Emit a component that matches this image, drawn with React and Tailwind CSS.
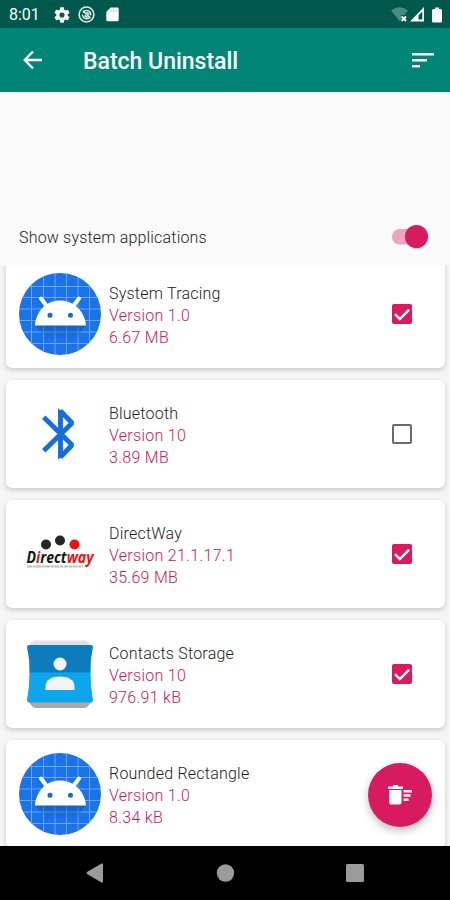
import React from "react";

function AndroidIcon() {
  return (
    <svg width="82" height="82" viewBox="0 0 82 82">
      <defs>
        <clipPath id="disc">
          <circle cx="41" cy="41" r="41" />
        </clipPath>
        <linearGradient id="headShade" x1="0" y1="0" x2="0" y2="1">
          <stop offset="0" stopColor="#0b4fae" stopOpacity="0.55" />
          <stop offset="1" stopColor="#0b4fae" stopOpacity="0" />
        </linearGradient>
      </defs>
      <g clipPath="url(#disc)">
        <rect width="82" height="82" fill="#1a73e8" />
        <path
          d="M12.500 0V82M24.500 0V82M36 0V82M47.500 0V82M59 0V82M70.500 0V82M0 13.500H82M0 24.500H82M0 36H82M0 47.500H82M0 59H82M0 70.500H82"
          stroke="#6aa6f3"
          strokeWidth="1"
        />
        <path d="M16 52H67L56 68H30Z" fill="url(#headShade)" />
      </g>
      <path d="M22 25.500L28.500 34M60 25.500L53.500 34" stroke="#fff" strokeWidth="4" strokeLinecap="round" />
      <path d="M16 52.500C17 37.500 28 27.500 41 27.500S65.500 37.500 67 52.500Z" fill="#fff" />
      <circle cx="31" cy="42.200" r="2.500" fill="#1a67d0" />
      <circle cx="51.500" cy="42.200" r="2.500" fill="#1a67d0" />
    </svg>
  );
}

function BluetoothIcon() {
  return (
    <svg width="82" height="82" viewBox="0 0 82 82" fill="none">
      <g transform="translate(.3 0)">
        <path
          d="M26.200 26L52.800 52L41.200 64V18L52.800 30L26.200 56"
          stroke="#146ee2"
          strokeWidth="4.900"
          strokeLinejoin="bevel"
          strokeLinecap="square"
        />
        <path d="M38.750 15.200L43.500 19.500H38.750ZM38.750 66.800L43.500 62.500H38.750Z" fill="#146ee2" />
      </g>
    </svg>
  );
}

function DirectWayIcon() {
  return (
    <svg width="82" height="82" viewBox="0 0 82 82">
      <circle cx="27" cy="31.500" r="5" fill="#262626" />
      <circle cx="41" cy="27.500" r="5" fill="#262626" />
      <circle cx="55.500" cy="31.500" r="5" fill="#f01010" />
      <text
        x="7.500"
        y="50"
        fontFamily="'Open Sans', sans-serif"
        fontSize="15.500"
        fontWeight="700"
        fontStyle="italic"
        textLength="67"
        lengthAdjust="spacingAndGlyphs"
        fill="#151515"
      >
        D<tspan fill="#f01010">i</tspan>rect<tspan fill="#f01010">way</tspan>
      </text>
      <path d="M8 53.500H64" stroke="#bdbdbd" strokeWidth="1.800" strokeDasharray="5 .6 3 .5" />
    </svg>
  );
}

function ContactsIcon() {
  return (
    <svg width="82" height="82" viewBox="0 0 82 82">
      <path d="M12 10Q13 7.500 17 7.500H65Q69 7.500 70 10L74 16H8Z" fill="#e1e1e1" />
      <path d="M8 67L13 73Q14 75 17 75H65Q68 75 69 73L74 67Z" fill="#aaa" />
      <path d="M8 14Q8 12 11 12H71Q74 12 74 14Q71 27 71.500 40H10.500Q11 27 8 14Z" fill="#0c7cbd" />
      <path d="M10.500 39.500H71.500Q71.500 54 74 67Q74 69.500 71 69.500H11Q8 69.500 8 67Q10.500 54 10.500 39.500Z" fill="#0ba6ec" />
      <circle cx="41" cy="31" r="6.500" fill="#f1f3f4" />
      <path d="M26.500 57V53.500C26.500 46.500 33 43.500 41 43.500S55.500 46.500 55.500 53.500V57Z" fill="#f1f3f4" />
    </svg>
  );
}

function Checkbox({ checked }) {
  if (!checked) {
    return <span className="h-5 w-5 rounded-[2px] border-2 border-[#6b6b6b]" />;
  }
  return (
    <svg width="20" height="20" viewBox="0 0 20 20">
      <rect width="20" height="20" rx="2" fill="#d81b60" />
      <path d="M3 10.200L7.800 15L17.200 5.600" fill="none" stroke="#fff" strokeWidth="2.400" />
    </svg>
  );
}

const apps = [
  { name: "System Tracing", version: "1.0", size: "6.67 MB", Icon: AndroidIcon, checked: true },
  { name: "Bluetooth", version: "10", size: "3.89 MB", Icon: BluetoothIcon, checked: false },
  { name: "DirectWay", version: "21.1.17.1", size: "35.69 MB", Icon: DirectWayIcon, checked: true },
  { name: "Contacts Storage", version: "10", size: "976.91 kB", Icon: ContactsIcon, checked: true },
  { name: "Rounded Rectangle", version: "1.0", size: "8.34 kB", Icon: AndroidIcon, hideCheckbox: true },
];

function AppCard({ name, version, size, Icon, checked, hideCheckbox }) {
  return (
    <div className="flex h-[108px] shrink-0 items-center rounded-md bg-white pl-[13px] pr-[33px] shadow-[0_2px_5px_rgba(0,0,0,0.2)]">
      <Icon />
      <div className="ml-2 flex-1 whitespace-nowrap pt-[3px] text-base font-light leading-[22px] tracking-[0.28px] text-[#d01852]">
        <div className="tracking-[0.22px] text-[#1c1c1c]">{name}</div>
        <div>Version {version}</div>
        <div>{size}</div>
      </div>
      {!hideCheckbox && <Checkbox checked={checked} />}
    </div>
  );
}

function StatusBar() {
  return (
    <div className="flex h-7 items-center bg-[#00574b] pl-[9px] pr-2 pt-px text-white">
      <span className="w-[45px] text-[16px] leading-7">8:01</span>
      <svg width="16" height="16" viewBox="2 2 20 20" fill="#fff">
        <path d="M19.140 12.940c.04-.3.060-.61.060-.94s-.02-.64-.07-.94l2.030-1.580a.49.49 0 0 0 .12-.61l-1.920-3.320a.49.49 0 0 0-.59-.22l-2.390.96a7 7 0 0 0-1.620-.94l-.36-2.540A.48.48 0 0 0 13.920 2.400h-3.840a.48.48 0 0 0-.47.410l-.36 2.540a7 7 0 0 0-1.620.94l-2.390-.96a.49.49 0 0 0-.59.220L2.740 8.870a.48.48 0 0 0 .12.610l2.030 1.580a6 6 0 0 0 0 1.880l-2.030 1.580a.49.49 0 0 0-.12.610l1.920 3.320c.12.220.37.290.59.220l2.390-.96c.5.380 1.030.7 1.620.94l.36 2.540c.05.240.24.410.47.410h3.840c.24 0 .44-.17.470-.41l.36-2.540a7 7 0 0 0 1.620-.94l2.390.96c.22.080.47 0 .59-.22l1.920-3.320a.48.48 0 0 0-.12-.61ZM12 15.200a3.200 3.200 0 1 1 0-6.400 3.200 3.200 0 0 1 0 6.400Z" />
      </svg>
      <svg className="ml-2" width="17" height="17" viewBox="0 0 17 17" fill="none" stroke="#e6efee">
        <circle cx="8.500" cy="8.500" r="7.400" strokeWidth="1.500" />
        <path d="M5 6.500Q7 3.500 10.500 4.800Q13.300 6.500 12.600 9.500M4.500 8.500Q4.500 12 8 12.700Q10 12.800 11.500 11.800" strokeWidth="1.400" />
        <path d="M5 5L12.500 12M6.500 9.500L9.500 11.500M8.500 6L11.500 8.500" strokeWidth="1.600" />
      </svg>
      <svg className="ml-[11px]" width="13" height="15" viewBox="0 0 13 15">
        <path d="M4.500 .5H11.500Q12.700 .5 12.700 1.700V13Q12.700 14.300 11.500 14.300H1.500Q.3 14.300 .3 13V5Z" fill="#fff" />
        <path d="M5 2.500V5M7.500 2.500V5M10 2.500V5" stroke="#a9c6c2" strokeWidth="1" />
      </svg>
      <span className="flex-1" />
      <svg width="17" height="15" viewBox="0 0 17 15">
        <path d="M0 3.500Q8.500 -3 17 3.500L13.500 8H10V12.500L8.500 14Z" fill="#4a8b81" />
        <path d="M10.500 9.500L15 14M15 9.500L10.500 14" stroke="#fff" strokeWidth="2" />
      </svg>
      <svg className="ml-0.5" width="14" height="15" viewBox="0 0 14 15">
        <path fillRule="evenodd" d="M0 14.500L14 0V14.500ZM8.500 12.500H12.300V4.500L8.500 8.500Z" fill="#fff" />
      </svg>
      <svg className="ml-2" width="10" height="16" viewBox="0 0 10 16">
        <path d="M3 .5H7V2H8.500Q10 2 10 3.500V14Q10 15.500 8.500 15.500H1.500Q0 15.500 0 14V3.500Q0 2 1.500 2H3Z" fill="#fff" />
      </svg>
    </div>
  );
}

export default function App() {
  return (
    <div className="relative flex h-[900px] w-[450px] flex-col overflow-hidden bg-[#fafafa] font-['Roboto',sans-serif]">
      <StatusBar />
      <header className="flex h-16 shrink-0 items-center bg-[#008577] pl-[23px] pr-4 text-white">
        <svg width="20" height="20" viewBox="0 0 20 20" fill="none" stroke="#fff" strokeWidth="2.300">
          <path d="M19 10H2M10 1.500L1.700 10L10 18.500" />
        </svg>
        <h1 className="ml-10 flex-1 pt-[3px] text-[23px] font-medium leading-8">Batch Uninstall</h1>
        <svg width="22" height="15" viewBox="0 0 22 15" fill="#fff">
          <path d="M0 0H22V2.600H0ZM0 6H15V8.600H0ZM0 12H8V14.600H0Z" />
        </svg>
      </header>
      <div className="h-[116px] shrink-0" />
      <div className="flex h-[57px] shrink-0 items-center justify-between pl-[19px] pr-[22px]">
        <span className="pt-0.5 text-base font-light tracking-[0.18px] text-[#1c1c1c]">Show system applications</span>
        <svg width="36" height="26" viewBox="0 0 36 26" className="overflow-visible">
          <rect x="0" y="5" width="32" height="15.500" rx="7.700" fill="#f0a3c0" />
          <circle cx="24.500" cy="13.600" r="11.600" fill="#000" opacity=".15" />
          <circle cx="24.500" cy="12.500" r="11.500" fill="#d81b60" />
        </svg>
      </div>
      <main className="flex h-[581px] shrink-0 flex-col overflow-hidden bg-[#f6f6f6] pl-1.5 pr-[5px]">
        <div className="-mt-[5px] flex flex-col gap-3">
          {apps.map((app) => (
            <AppCard key={app.name} {...app} />
          ))}
        </div>
      </main>
      <nav className="flex h-[54px] shrink-0 items-center bg-black pl-[86px] pr-[86px]">
        <svg width="278" height="20" viewBox="0 0 278 20" fill="#9b9b9b">
          <path d="M15.500 .5Q17 0 17 1.500V18.500Q17 20 15.500 19.500L1 11Q0 10 1 9Z" />
          <circle cx="139.500" cy="10" r="8.700" />
          <rect x="260" y="1" width="18" height="18" rx="1.500" />
        </svg>
      </nav>
      <button
        aria-label="Uninstall selected"
        className="absolute left-[368px] top-[763px] flex h-16 w-16 items-center justify-center rounded-full bg-[#d81b60] shadow-[0_4px_8px_rgba(0,0,0,0.25)]"
      >
        <svg width="24" height="20" viewBox="0 0 24 20" fill="#fff">
          <path d="M0 1.500H4.500L5.500 0H9.500L10.500 1.500H15V4H0ZM1.200 5H13.500V17.500Q13.500 19.500 11.500 19.500H3.200Q1.200 19.500 1.200 17.500ZM15.500 5H24V7.500H15.500ZM15.500 9.300H22.500V11.800H15.500ZM15.500 13.600H20.500V16.100H15.500Z" />
        </svg>
      </button>
    </div>
  );
}
